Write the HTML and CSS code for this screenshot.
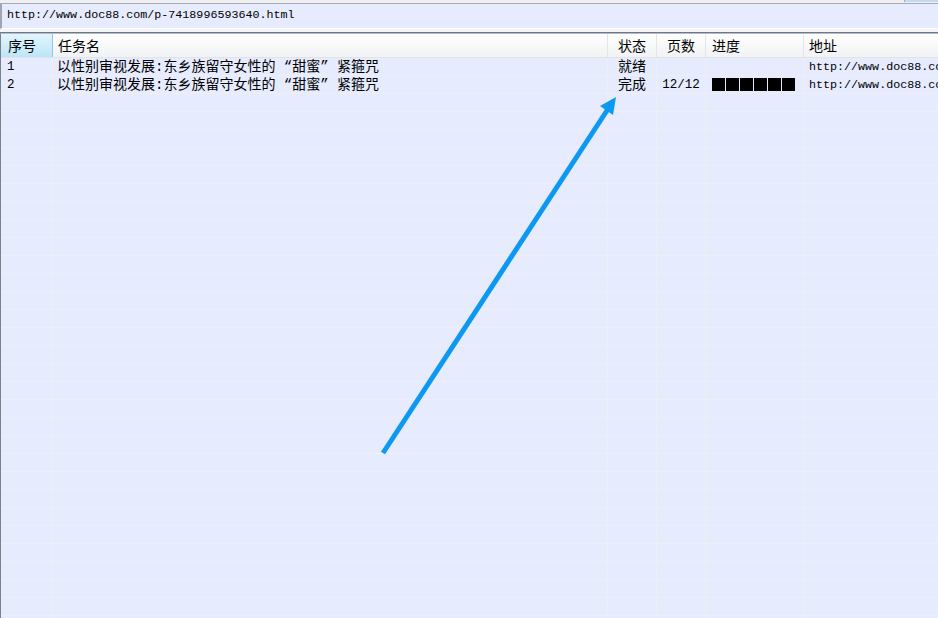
FILE: index.html
```html
<!DOCTYPE html>
<html lang="zh-CN">
<head>
    <meta charset="UTF-8">
    <title>任务列表</title>
    <link rel="stylesheet" href="styles.css">
</head>
<body>
    <div class="topbar"><div class="top-tab"></div></div>
    <div class="urlbox">http://www.doc88.com/p-7418996593640.html</div>
    <div class="spacer"></div>
    <div class="list">
        <div class="row header">
            <div class="cell c1 selected">序号</div>
            <div class="cell c2">任务名</div>
            <div class="cell c3">状态</div>
            <div class="cell c4">页数</div>
            <div class="cell c5">进度</div>
            <div class="cell c6">地址</div>
        </div>
        <div id="rows">
            <div class="row">
                <div class="cell c1 mono">1</div>
                <div class="cell c2">以性别审视发展:东乡族留守女性的 “甜蜜” 紧箍咒</div>
                <div class="cell c3">就绪</div>
                <div class="cell c4 mono"></div>
                <div class="cell c5"></div>
                <div class="cell c6 mono">http://www.doc88.co</div>
            </div>
            <div class="row">
                <div class="cell c1 mono">2</div>
                <div class="cell c2">以性别审视发展:东乡族留守女性的 “甜蜜” 紧箍咒</div>
                <div class="cell c3">完成</div>
                <div class="cell c4 mono">12/12</div>
                <div class="cell c5">
                    <div class="progress">
                        <i></i><i></i><i></i><i></i><i></i><i></i>
                    </div>
                </div>
                <div class="cell c6 mono">http://www.doc88.co</div>
            </div>
        </div>
        <svg class="arrow" width="938" height="618" viewBox="0 0 938 618">
            <line x1="383" y1="453" x2="608" y2="109" stroke="#0d99f2" stroke-width="5"/>
            <polygon points="616,97 613,115 600,106" fill="#0d99f2"/>
        </svg>
    </div>

    <script>
        // fill the rest of the list view with empty grid rows
        const rows = document.getElementById('rows');
        for (let i = 0; i < 30; i++) {
            const row = document.createElement('div');
            row.className = 'row';
            for (let c = 1; c <= 6; c++) {
                const cell = document.createElement('div');
                cell.className = 'cell c' + c;
                row.appendChild(cell);
            }
            rows.appendChild(row);
        }
    </script>
</body>
</html>
```

FILE: styles.css
```css
body {
    margin: 0;
    width: 938px;
    height: 618px;
    overflow: hidden;
    background-color: #f0f0f0;
    font-family: "Liberation Mono", "Noto Sans CJK SC", monospace;
    font-size: 14px;
    color: #000;
}
.topbar {
    height: 3px;
    border-bottom: 1px solid #a3abbb;
    position: relative;
}
.top-tab {
    position: absolute;
    right: 0;
    top: 0;
    width: 33px;
    height: 2px;
    background-color: #c8d8ee;
    border-left: 1px solid #9ab0d0;
}
.urlbox {
    height: 24px;
    line-height: 22px;
    padding-left: 5px;
    background-color: #e6ecfe;
    border-left: 2px solid #a0a6b0;
    border-bottom: 1px solid #fff;
    font-size: 11.7px;
}
.spacer {
    height: 3px;
    background-color: #f4f5f7;
    border-bottom: 1px solid #6e768a;
}
.list {
    position: relative;
    height: 600px;
    background-color: #e6ecfe;
    border-left: 1px solid #7c8088;
    border-top: 1px solid #b4bccc;
}
.row {
    display: flex;
    height: 17px;
    border-bottom: 1px solid #eeeff6;
}
.cell {
    box-sizing: border-box;
    height: 17px;
    flex-shrink: 0;
    border-right: 1px solid #eeeff6;
    white-space: nowrap;
    overflow: hidden;
    line-height: 17px;
    padding-top: 1px;
    padding-left: 5px;
}
.mono {
    font-size: 12.5px;
}
.c1 { width: 52px; padding-left: 6px; }
.c2 { width: 555px; padding-left: 4px; }
.c3 { width: 49px; text-align: center; padding-left: 0; }
.c4 { width: 49px; text-align: center; padding-left: 0; }
.c5 { width: 98px; padding-left: 6px; }
.c6 { flex: 1; border-right: none; padding-left: 5px; }
.c6.mono { font-size: 11.7px; }

.header {
    height: 23px;
    border-bottom: 1px solid #e2e3e8;
    background: linear-gradient(#ffffff, #f1f2f4);
}
.header .cell {
    height: 23px;
    line-height: 21px;
    padding-top: 3px;
    border-right-color: #e3e5ea;
}
.header .c1 { padding-left: 7px; }
.header .c2 { padding-left: 5px; }
.header .selected {
    background: linear-gradient(#e2f5fd, #bde5f8);
    border-right-color: #92c6e6;
}
.progress {
    display: flex;
    gap: 1px;
    padding-top: 1px;
}
.progress i {
    width: 13px;
    height: 13px;
    background-color: #000;
}
.arrow {
    position: absolute;
    left: -1px;
    top: -34px;
    pointer-events: none;
}
```
